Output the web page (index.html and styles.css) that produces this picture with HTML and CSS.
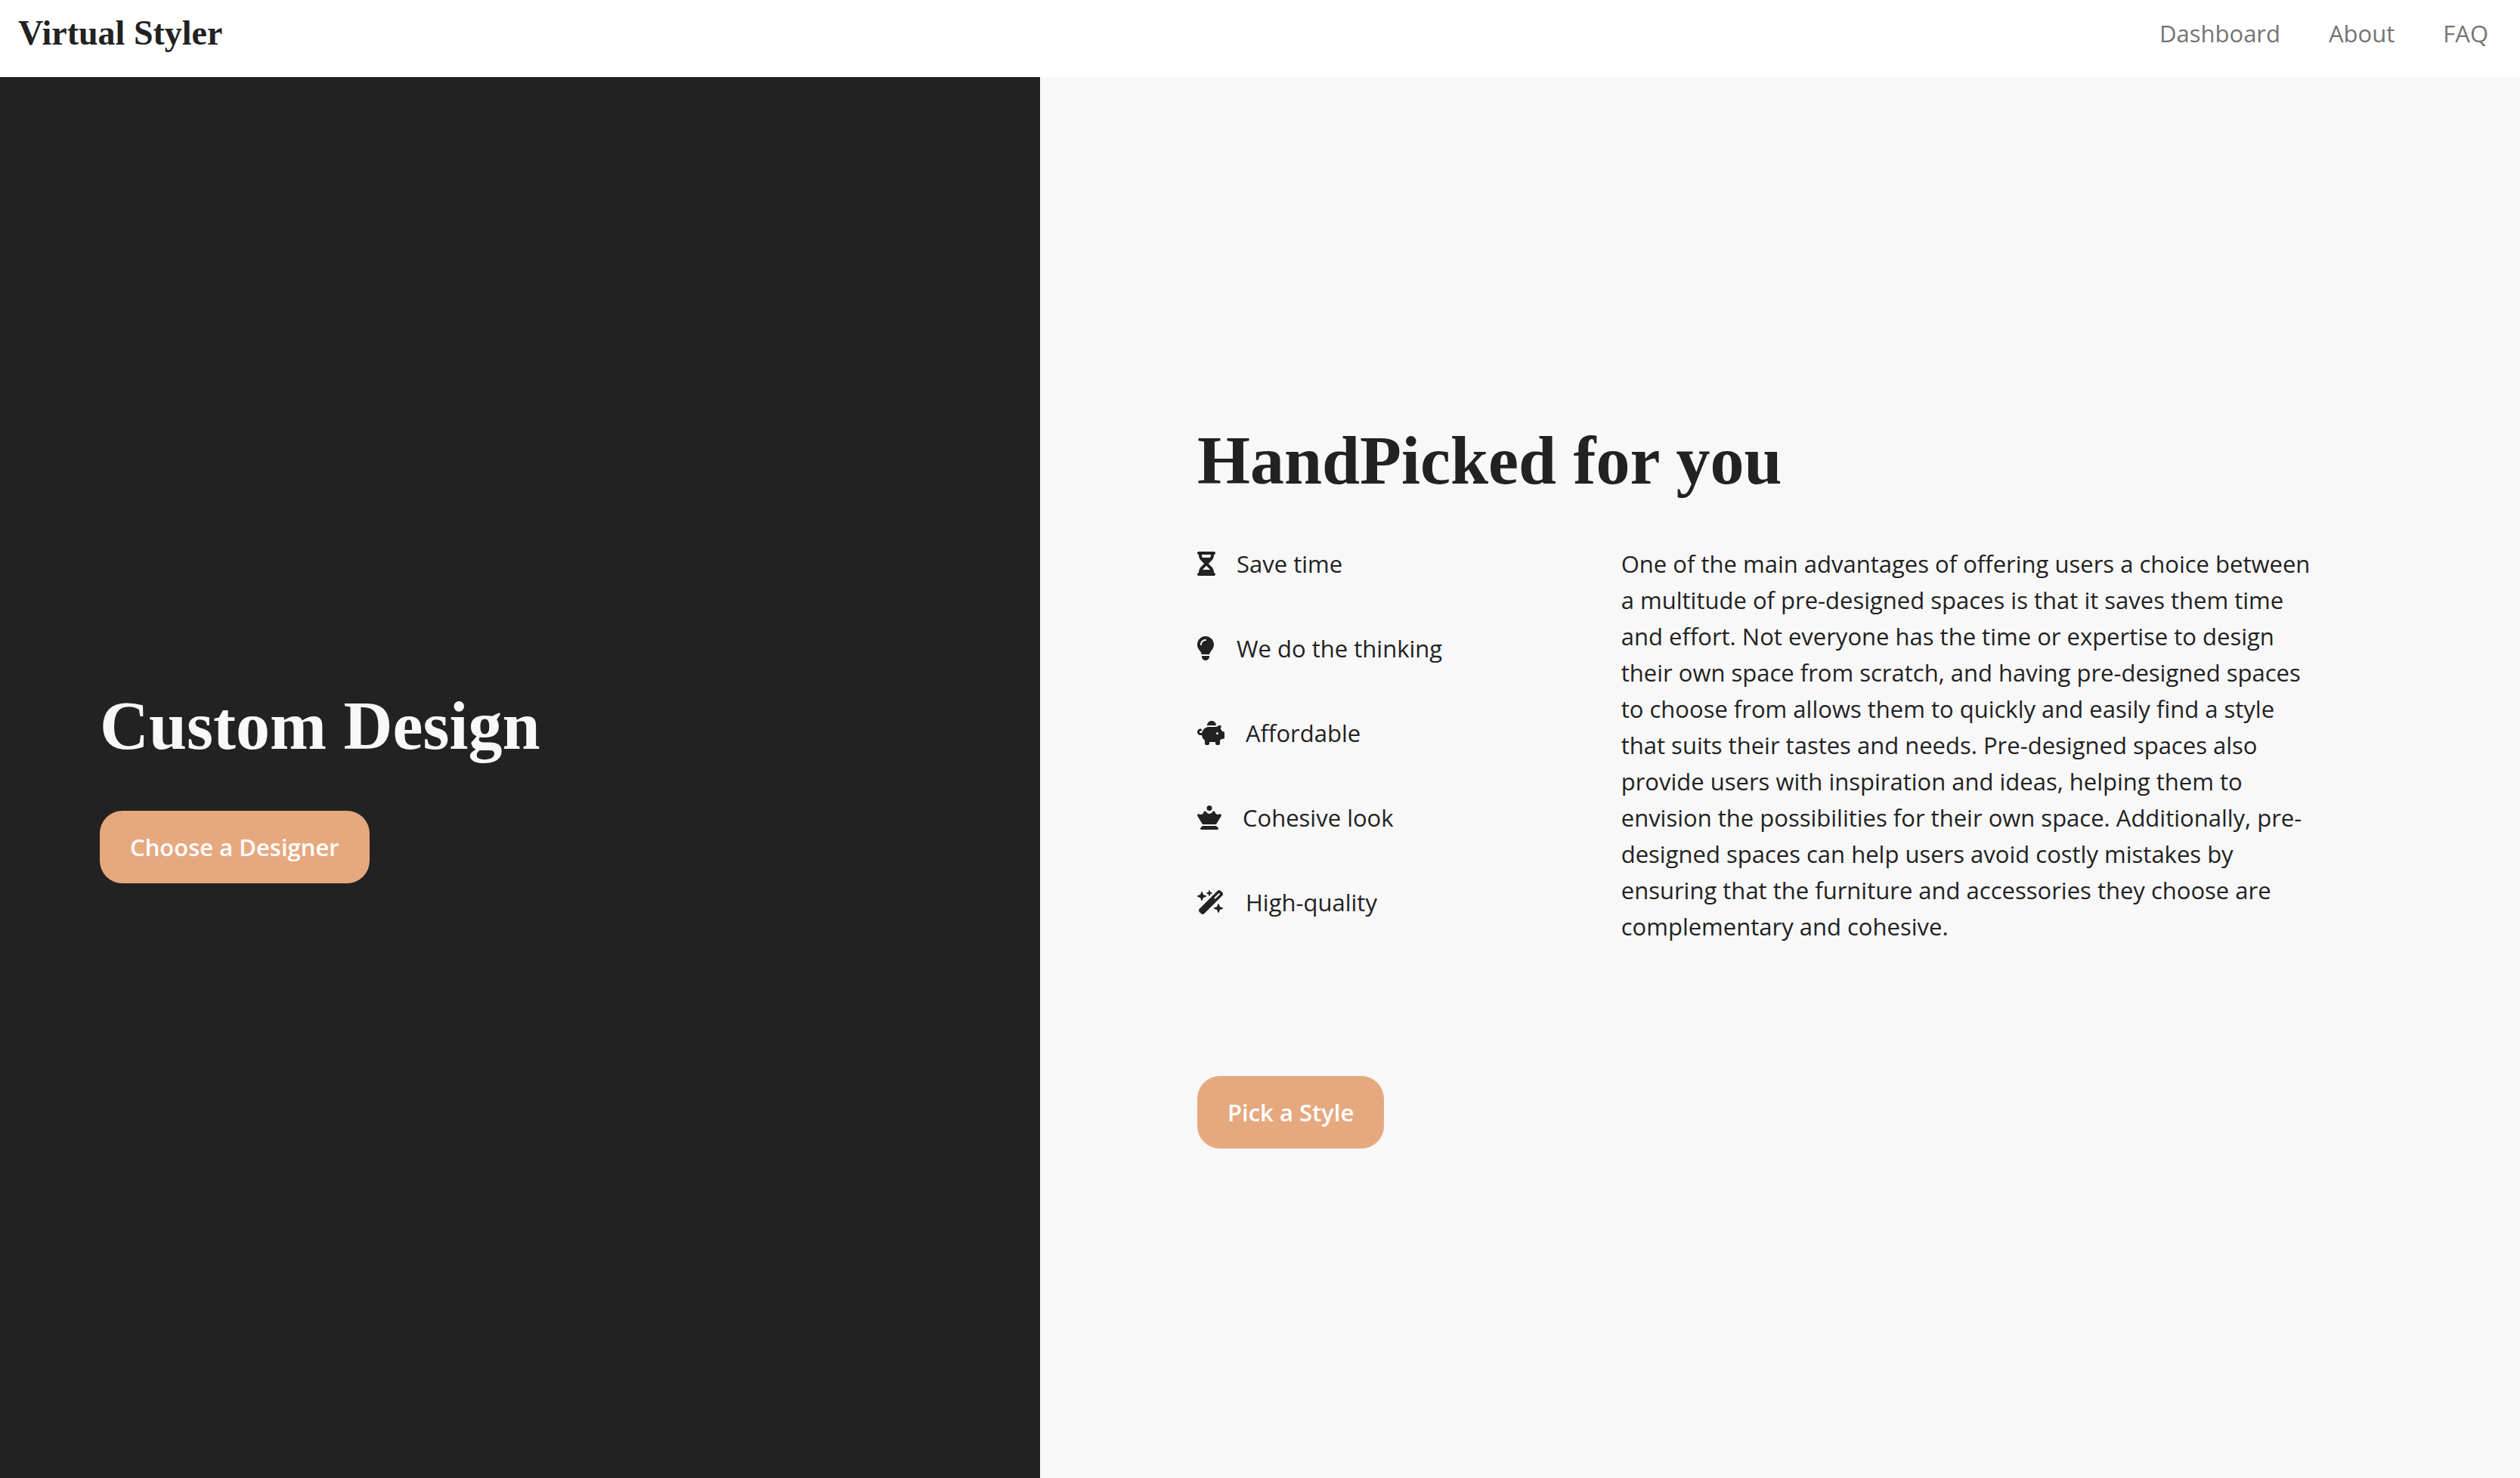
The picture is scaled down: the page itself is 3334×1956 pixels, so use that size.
FILE: index.html
```html
<!DOCTYPE html>
<html lang="en">
<head>
<meta charset="utf-8">
<meta name="viewport" content="width=device-width, initial-scale=1">
<title>Virtual Styler</title>
<link rel="stylesheet" href="styles.css">
</head>
<body>
<header class="navbar">
  <a class="brand" href="#">Virtual Styler</a>
  <nav class="nav-links">
    <a href="#">Dashboard</a>
    <a href="#">About</a>
    <a href="#">FAQ</a>
  </nav>
</header>
<main class="split">
  <section class="panel panel-dark">
    <h1 class="title">Custom Design</h1>
    <button class="btn" type="button">Choose a Designer</button>
  </section>
  <section class="panel panel-light">
    <h2 class="title">HandPicked for you</h2>
    <div class="details">
      <ul class="benefits">
        <li><svg class="icon" viewBox="0 0 384 512" aria-hidden="true"><path d="M32 0C14.3 0 0 14.3 0 32S14.3 64 32 64V75c0 42.4 16.9 83.1 46.9 113.1L146.7 256 78.9 323.9C48.9 353.9 32 394.6 32 437v11c-17.7 0-32 14.3-32 32s14.3 32 32 32H64 320h32c17.7 0 32-14.3 32-32s-14.3-32-32-32V437c0-42.4-16.9-83.1-46.9-113.1L237.3 256l67.9-67.9c30-30 46.9-70.7 46.9-113.1V64c17.7 0 32-14.3 32-32s-14.3-32-32-32H320 64 32zM96 75V64H288V75c0 19-5.6 37.4-16 53H112c-10.3-15.6-16-34-16-53zm16 309c3.5-5.3 7.6-10.3 12.1-14.9L192 301.3l67.9 67.9c4.6 4.6 8.6 9.6 12.1 14.9H112z"/></svg>Save time</li>
        <li><svg class="icon" viewBox="16 0 384 512" aria-hidden="true"><path d="M272 384c9.6-31.9 29.5-59.1 49.2-86.2l0 0c5.2-7.1 10.4-14.2 15.4-21.4c19.8-28.5 31.4-63 31.4-100.3C368 78.8 289.2 0 192 0S16 78.8 16 176c0 37.3 11.6 71.9 31.4 100.3c5 7.2 10.2 14.3 15.4 21.4l0 0c19.8 27.1 39.7 54.4 49.2 86.2H272zM192 512c44.2 0 80-35.8 80-80V416H112v16c0 44.2 35.8 80 80 80zM112 176c0 8.8-7.2 16-16 16s-16-7.2-16-16c0-61.9 50.1-112 112-112c8.8 0 16 7.2 16 16s-7.2 16-16 16c-44.2 0-80 35.8-80 80z"/></svg>We do the thinking</li>
        <li><svg class="icon" viewBox="0 0 576 512" aria-hidden="true"><path d="M400 96l0 .7c-5.3-.4-10.6-.7-16-.7H256c-16.5 0-32.5 2.1-47.8 6c-.1-2-.2-4-.2-6c0-53 43-96 96-96s96 43 96 96zm-16 32c3.5 0 7 .1 10.4 .3c4.2 .3 8.4 .7 12.6 1.3C424.6 109.1 450.8 96 480 96h11.5c10.4 0 18 9.8 15.5 19.9l-13.8 55.2c15.8 14.8 28.7 32.8 37.5 52.9H544c17.7 0 32 14.3 32 32v96c0 17.7-14.3 32-32 32H512c-9.1 12.1-19.9 22.9-32 32v64c0 17.7-14.3 32-32 32H416c-17.7 0-32-14.3-32-32V448H256v32c0 17.7-14.3 32-32 32H192c-17.7 0-32-14.3-32-32V416c-34.9-26.2-58.7-66.3-63.2-112H68c-37.6 0-68-30.4-68-68s30.4-68 68-68h4c13.3 0 24 10.7 24 24s-10.7 24-24 24H68c-11 0-20 9-20 20s9 20 20 20H99.2c12.1-59.8 57.7-107.5 116.3-122.8c12.9-3.4 26.5-5.2 40.5-5.2H384zm64 136a24 24 0 1 0 -48 0 24 24 0 1 0 48 0z"/></svg>Affordable</li>
        <li><svg class="icon" viewBox="0 0 512 512" aria-hidden="true"><path d="M256 0a56 56 0 1 1 0 112A56 56 0 1 1 256 0zM134.1 143.8c3.3-13 15-23.8 30.2-23.8c12.3 0 22.6 7.2 27.7 17c12 23.2 36.2 39 64 39s52-15.8 64-39c5.1-9.8 15.4-17 27.7-17c15.3 0 27 10.8 30.2 23.8c7 27.8 32.2 48.3 62.1 48.3c10.8 0 21-2.7 29.8-7.4c8.4-4.4 18.9-4.5 27.6 .9c13 8 17.1 25 9.2 38L399.7 400H112.3L5.4 223.6c-7.9-13-3.8-30 9.2-38c8.7-5.3 19.2-5.3 27.6-.9c8.9 4.7 19 7.4 29.8 7.4c29.9 0 55.1-20.5 62.1-48.3zM112 432H400l41.4 41.4c4.2 4.2 6.6 10 6.6 16c0 12.5-10.1 22.6-22.6 22.6H86.6C74.1 512 64 501.9 64 489.4c0-6 2.4-11.8 6.6-16L112 432z"/></svg>Cohesive look</li>
        <li><svg class="icon" viewBox="0 0 576 512" aria-hidden="true"><path d="M234.7 42.7L197 56.8c-3 1.1-5 4-5 7.2s2 6.1 5 7.2l37.7 14.1L248.8 123c1.1 3 4 5 7.2 5s6.1-2 7.2-5l14.1-37.7L315 71.2c3-1.1 5-4 5-7.2s-2-6.1-5-7.2L277.3 42.7 263.2 5c-1.1-3-4-5-7.2-5s-6.1 2-7.2 5L234.7 42.7zM46.1 395.4c-18.7 18.7-18.7 49.1 0 67.9l34.6 34.6c18.7 18.7 49.1 18.7 67.9 0L529.9 116.5c18.7-18.7 18.7-49.1 0-67.9L495.3 14.1c-18.7-18.7-49.1-18.7-67.9 0L46.1 395.4zM484.6 82.6l-105 105-23.3-23.3 105-105 23.3 23.3zM7.5 117.2C3 118.9 0 123.2 0 128s3 9.1 7.5 10.8L64 160l21.2 56.5c1.7 4.5 6 7.5 10.8 7.5s9.1-3 10.8-7.5L128 160l56.5-21.2c4.5-1.7 7.5-6 7.5-10.8s-3-9.1-7.5-10.8L128 96 106.8 39.5C105.1 35 100.8 32 96 32s-9.1 3-10.8 7.5L64 96 7.5 117.2zm352 256c-4.5 1.7-7.5 6-7.5 10.8s3 9.1 7.5 10.8L416 416l21.2 56.5c1.7 4.5 6 7.5 10.8 7.5s9.1-3 10.8-7.5L480 416l56.5-21.2c4.5-1.7 7.5-6 7.5-10.8s-3-9.1-7.5-10.8L480 352l-21.2-56.5c-1.7-4.5-6-7.5-10.8-7.5s-9.1 3-10.8 7.5L416 352l-56.5 21.2z"/></svg>High-quality</li>
      </ul>
      <p class="copy">One of the main advantages of offering users a choice between a multitude of pre-designed spaces is that it saves them time and effort. Not everyone has the time or expertise to design their own space from scratch, and having pre-designed spaces to choose from allows them to quickly and easily find a style that suits their tastes and needs. Pre-designed spaces also provide users with inspiration and ideas, helping them to envision the possibilities for their own space. Additionally, pre-designed spaces can help users avoid costly mistakes by ensuring that the furniture and accessories they choose are complementary and cohesive.</p>
    </div>
    <button class="btn" type="button">Pick a Style</button>
  </section>
</main>
</body>
</html>
```
FILE: styles.css
```css
* {
  box-sizing: border-box;
}

body {
  margin: 0;
  min-height: 100vh;
  display: flex;
  flex-direction: column;
  background: #fff;
  color: #222;
  font-family: "Open Sans", "Noto Sans", sans-serif;
  font-size: 31px;
  line-height: 48px;
}

.navbar {
  display: flex;
  justify-content: space-between;
  align-items: flex-start;
  padding: 20px 42px 34px 24px;
}

.brand {
  color: #222;
  font-family: "Liberation Serif", serif;
  font-size: 46px;
  font-weight: 700;
  text-decoration: none;
}

.nav-links {
  display: flex;
  gap: 64px;
}

.nav-links a {
  color: #747474;
  text-decoration: none;
}

.split {
  flex: 1;
  display: grid;
  grid-template-columns: 688fr 979fr;
}

.panel {
  display: flex;
  flex-direction: column;
  justify-content: center;
  align-items: flex-start;
}

.panel-dark {
  padding: 0 132px;
  background: #222;
  color: #f8f8f8;
}

.panel-light {
  padding: 0 208px;
  background: #f8f8f8;
}

.title {
  margin: 0 0 40px;
  font-family: "Liberation Serif", serif;
  font-size: 90px;
  font-weight: 700;
  line-height: 144px;
}

.btn {
  padding: 24px 40px;
  border: 0;
  border-radius: 30px;
  background: #e6a97f;
  color: #fff;
  font: inherit;
  font-weight: 600;
  cursor: pointer;
}

.details {
  display: grid;
  grid-template-columns: 4fr 7fr;
  align-items: start;
  width: 100%;
  margin-bottom: 174px;
}

.benefits {
  display: grid;
  gap: 64px;
  margin: 0;
  padding: 0;
  list-style: none;
}

.benefits li {
  display: flex;
  align-items: center;
  gap: 28px;
}

.icon {
  height: 32px;
  fill: currentColor;
}

.copy {
  max-width: 928px;
  margin: 0;
}
```
